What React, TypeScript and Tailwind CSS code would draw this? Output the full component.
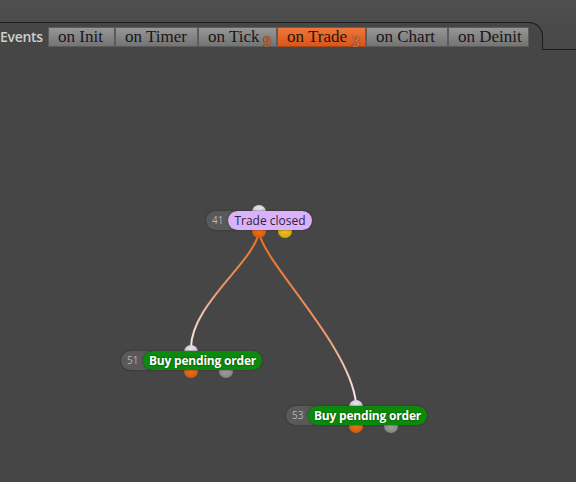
import React from "react";

const TABS = [
  { label: "on Init", w: "w-[67px]" },
  { label: "on Timer", w: "w-[83px]" },
  { label: "on Tick", w: "w-[79px]", sub: "9" },
  { label: "on Trade", w: "w-[89px]", sub: "3", active: true },
  { label: "on Chart", w: "w-[82px]" },
  { label: "on Deinit", w: "w-[81px]" },
];

const port = "absolute h-[14px] w-[14px] rounded-full";

function Node({
  pos,
  num,
  label,
  tone,
}: {
  pos: string;
  num: string;
  label: string;
  tone: "purple" | "green";
}) {
  const purple = tone === "purple";
  return (
    <div className={`absolute flex items-center ${pos}`}>
      <div className="flex h-[19px] w-[28px] items-center rounded-l-full bg-[#595959] pl-[6px] text-[10px] text-[#b4b4b4] shadow-[0_0_2px_#2a2a2a]">
        {num}
      </div>
      <div className="relative -ml-[6px]">
        {/* input port */}
        <div
          className={`${port} -top-[6px] bg-[radial-gradient(circle_at_50%_35%,#eee8f2,#b7abc3)] ${
            purple ? "left-[24px]" : "left-[41px]"
          }`}
        />
        {/* output ports */}
        <div
          className={`${port} top-[13px] bg-[radial-gradient(circle_at_50%_40%,#f27a1e,#c94c06)] ${
            purple ? "left-[24px]" : "left-[41px]"
          }`}
        />
        <div
          className={
            purple
              ? `${port} left-[50px] top-[13px] bg-[radial-gradient(circle_at_50%_40%,#f3cb1a,#c79a05)]`
              : `${port} left-[76px] top-[13px] bg-[radial-gradient(circle_at_50%_40%,#a6a6a6,#7a7a7a)]`
          }
        />
        <div
          className={
            purple
              ? "relative flex h-[19px] w-[84px] items-center justify-center rounded-full bg-[#d9b2fb] text-[12px] text-[#2e2438] shadow-[0_0_2px_#2a2a2a]"
              : "relative flex h-[19px] w-[119px] items-center justify-center rounded-full bg-[#0b8a0b] text-[12px] font-bold tracking-[-0.2px] text-white shadow-[0_0_2px_#2a2a2a] [text-shadow:0_0_2px_#0a3a0a]"
          }
        >
          {label}
        </div>
      </div>
    </div>
  );
}

export default function App() {
  return (
    <div className="relative h-[482px] w-[576px] overflow-hidden bg-[#464646] font-['Open_Sans','Noto_Sans',sans-serif]">
      {/* header */}
      <div className="flex h-[50px] w-full bg-[linear-gradient(#4f4f4f,#474747)]">
        <div className="flex w-[543px] flex-col">
          <div className="h-[22px]" />
          <div className="flex h-[28px] items-start rounded-tr-[14px] border-r-[1.5px] border-t-[1.5px] border-[#1c1c1c] bg-[#464646] pt-[3.5px]">
            <span className="w-[48px] text-[14px] font-semibold leading-[20px] tracking-[-0.3px] text-[#cfcfcf]">
              Events
            </span>
            <div className="flex">
              {TABS.map((t) => (
                <div
                  key={t.label}
                  className={`relative flex h-[20px] border pl-[9px] font-['Liberation_Serif',serif] ${t.w} ${
                    t.active
                      ? "border-[#a4471b] bg-[linear-gradient(#f0763a,#d9561a)] text-[#2a1408]"
                      : "border-[#5c5c5c] bg-[linear-gradient(#969696,#747474)] text-[#161616]"
                  }`}
                >
                  <span className="text-[17px] leading-[18px]">{t.label}</span>
                  {t.sub && (
                    <span
                      className={`absolute bottom-[-4px] right-[5px] text-[16px] font-bold leading-[16px] [text-shadow:0_0_1px_#2a1206] ${
                        t.active ? "text-[#c9784a]" : "text-[#b8683a]"
                      }`}
                    >
                      {t.sub}
                    </span>
                  )}
                </div>
              ))}
            </div>
          </div>
        </div>
        <div className="flex-1 border-b-[1.5px] border-[#1c1c1c]" />
      </div>

      {/* connections */}
      <svg className="absolute left-0 top-0" width={576} height={482}>
        <defs>
          <linearGradient id="g1" x1="0" y1="0" x2="0" y2="1">
            <stop offset="0" stopColor="#ec6a1c" />
            <stop offset="0.5" stopColor="#ec9a6c" />
            <stop offset="1" stopColor="#f7f0f5" />
          </linearGradient>
          <linearGradient id="g2" x1="0" y1="0" x2="0" y2="1">
            <stop offset="0" stopColor="#ec6a1c" />
            <stop offset="0.6" stopColor="#ec9a6c" />
            <stop offset="1" stopColor="#f7f0f5" />
          </linearGradient>
        </defs>
        <path d="M259 232 C 254 262, 191 305, 191 348" stroke="url(#g1)" strokeWidth="2" fill="none" />
        <path d="M259 232 C 263 262, 350 345, 356 403" stroke="url(#g2)" strokeWidth="2" fill="none" />
      </svg>

      <Node pos="left-[206px] top-[211px]" num="41" label="Trade closed" tone="purple" />
      <Node pos="left-[121px] top-[351px]" num="51" label="Buy pending order" tone="green" />
      <Node pos="left-[286px] top-[406px]" num="53" label="Buy pending order" tone="green" />
    </div>
  );
}
